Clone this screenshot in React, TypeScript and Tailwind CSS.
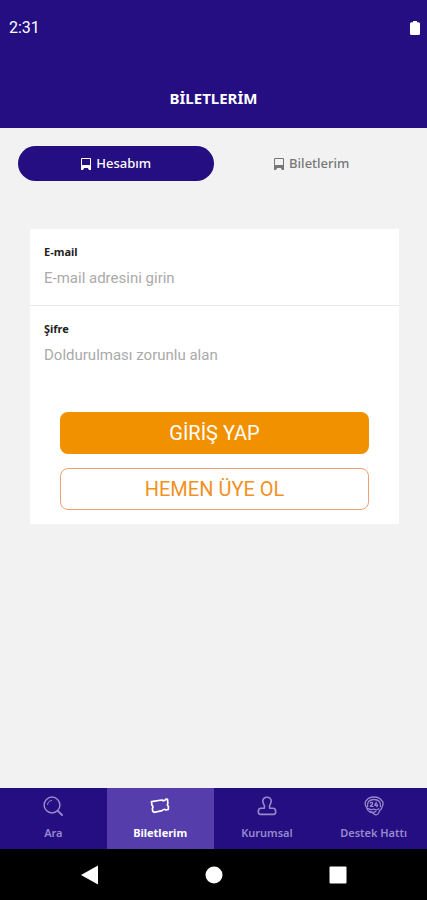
import React, { useState } from 'react';

function BusIcon() {
  return (
    <svg width="12" height="13" viewBox="0 0 12 13" fill="none" aria-hidden="true">
      <path d="M1.500 9V1.500h9V9" stroke="currentColor" strokeWidth="1" />
      <path d="M1 8h10v5H9l-1.200-2H4.200L3 13H1z" fill="currentColor" />
    </svg>
  );
}

function SearchIcon() {
  return (
    <svg width="20" height="20" viewBox="0 0 20 20" fill="none" stroke="currentColor" strokeWidth="1.5" strokeLinecap="round" aria-hidden="true">
      <circle cx="9" cy="9" r="7.9" />
      <path d="M4.600 8.600A4.300 4.300 0 0 1 8.600 4.500" strokeWidth="1" />
      <path d="M14.800 14.800 19 19" strokeWidth="1.9" />
    </svg>
  );
}

function TicketIcon() {
  return (
    <svg width="20" height="20" viewBox="0 0 20 20" fill="none" stroke="currentColor" strokeWidth="1.7" strokeLinejoin="round" aria-hidden="true">
      <path d="M1.500 5.700 11.800 4q1.300 1 2.600.5 1-.4 1.300-1.300l1.800.1.400 4.200q-.7.7-.5 1.500.2.800 1 1.300l-.1 3.200-2.500.5q-1-.7-2-.5-1.100.2-1.700 1.100L4.200 16.300 2.700 15.200 2.400 12.300q.7-.8.5-1.600-.2-.9-1-1.400z" />
    </svg>
  );
}

function PersonIcon() {
  return (
    <svg width="20" height="20" viewBox="0 0 20 20" fill="none" stroke="currentColor" strokeWidth="1.6" strokeLinejoin="round" aria-hidden="true">
      <path d="M10 1.200C7.400 1.200 5.800 2.900 5.800 5.200c0 1.700.6 2.700 1.300 3.700.5.900.5 2.200.2 3.300H4c-1.800 0-2.700 1.200-2.700 3.200 0 2.200.6 3 2.200 3h13c1.600 0 2.200-.8 2.200-3 0-2-.9-3.200-2.700-3.200h-3.300c-.3-1.100-.3-2.400.2-3.300.7-1 1.300-2 1.300-3.700 0-2.300-1.600-4-4.200-4z" />
    </svg>
  );
}

function SupportIcon() {
  return (
    <svg width="20" height="20" viewBox="0 0 20 20" fill="none" stroke="currentColor" strokeWidth="1.3" strokeLinecap="round" strokeLinejoin="round" aria-hidden="true">
      <path d="M2.300 4.600C4 2 7 1 10 1s6 1 7.700 3.600c1.800 1 1.800 4.200.4 6.200-.4 2.200-1.700 3.300-2.600 3.700-.5 2.600-1.600 4.300-3.500 4.300-1.700 0-2.600-1.200-4-2.400-2.700-.2-4.700-1.900-5.500-5.200C.7 8.900.8 5.800 2.300 4.600z" />
      <path d="M3.600 10.500C2.800 6 5.600 3.500 10 3.500s7.200 2.500 6.400 7" />
      <path d="M6.300 7.100c.8-1.300 2.600-.7 2.300.6-.2 1-1.800 1.800-2.300 2.700H9M12.300 6.300l-1.600 3h3M13 7.800v3" />
      <path d="M3.600 12.400c1.800.5 2.700 1.400 4 1.200s1.900-.7 2.900-.2 2.600.6 4.300-.6M6.100 16c2.300.6 4.300.5 5.700-.5" />
    </svg>
  );
}

const navItems = [
  { label: 'Ara', icon: SearchIcon },
  { label: 'Biletlerim', icon: TicketIcon },
  { label: 'Kurumsal', icon: PersonIcon },
  { label: 'Destek Hattı', icon: SupportIcon },
];

export default function App() {
  const [tab, setTab] = useState('Hesabım');
  const [active, setActive] = useState('Biletlerim');
  const [email, setEmail] = useState('');
  const [password, setPassword] = useState('');

  return (
    <div className="flex min-h-screen flex-col bg-[#f2f2f2] font-['Noto_Sans',sans-serif]">
      <header className="bg-[#250e82] pb-[18px] text-white">
        <div className="flex h-14 items-center justify-between pl-[9px] pr-[7px] font-['Roboto',sans-serif] text-base">
          <span>2:31</span>
          <svg width="10" height="14" viewBox="0 0 10 14" fill="currentColor" aria-label="Pil">
            <path d="M3 0h4v1.300h1.500Q10 1.300 10 2.800v9.700Q10 14 8.500 14h-7Q0 14 0 12.500V2.800Q0 1.300 1.500 1.300H3z" />
          </svg>
        </div>
        <h1 className="pt-[30px] text-center text-[15px] font-bold leading-6">BİLETLERİM</h1>
      </header>

      <main className="flex-1">
        {/* Tabs */}
        <div className="grid grid-cols-2 px-[18px] pt-[18px]">
          {['Hesabım', 'Biletlerim'].map((name) => (
            <button
              key={name}
              type="button"
              onClick={() => setTab(name)}
              className={`flex h-[35px] items-center justify-center gap-1 rounded-full text-[13px] font-medium ${
                tab === name ? 'bg-[#250e82] text-white' : 'text-[#777777]'
              }`}
            >
              <BusIcon />
              {name}
            </button>
          ))}
        </div>

        {/* Login form */}
        <form
          onSubmit={(e) => e.preventDefault()}
          className="ml-[30px] mr-7 mt-12 bg-white pb-[14px]"
        >
          <div className="border-b border-[#e9e9e9] px-[14px] pb-[13px] pt-[15px]">
            <label htmlFor="email" className="block text-[11px] font-bold leading-4 text-[#222222]">
              E-mail
            </label>
            <input
              id="email"
              type="email"
              value={email}
              onChange={(e) => setEmail(e.target.value)}
              placeholder="E-mail adresini girin"
              className="mt-1 block h-7 w-full font-['Roboto',sans-serif] text-[15px] text-[#222222] outline-none placeholder:text-[#aaaaaa]"
            />
          </div>
          <div className="px-[14px] pt-[15px]">
            <label htmlFor="password" className="block text-[11px] font-bold leading-4 text-[#222222]">
              Şifre
            </label>
            <input
              id="password"
              type="password"
              value={password}
              onChange={(e) => setPassword(e.target.value)}
              placeholder="Doldurulması zorunlu alan"
              className="mt-1 block h-7 w-full font-['Roboto',sans-serif] text-[15px] text-[#222222] outline-none placeholder:text-[#aaaaaa]"
            />
          </div>
          <div className="mt-[43px] flex flex-col gap-[14px] px-[30px] font-['Roboto',sans-serif] text-xl">
            <button type="submit" className="h-[42px] rounded-lg bg-[#f29100] text-white">
              GİRİŞ YAP
            </button>
            <button type="button" className="h-[42px] rounded-lg border border-[#f2a070] text-[#f29122]">
              HEMEN ÜYE OL
            </button>
          </div>
        </form>
      </main>

      <nav className="grid h-[61px] grid-cols-4 bg-[#250e82]">
        {navItems.map(({ label, icon: Icon }) => (
          <button
            key={label}
            type="button"
            onClick={() => setActive(label)}
            className={`flex flex-col items-center gap-[9px] pt-2 text-[11px] leading-4 ${
              active === label ? 'bg-[#553dac] font-bold text-white' : 'font-semibold text-[#9689cc]'
            }`}
          >
            <Icon />
            {label}
          </button>
        ))}
      </nav>

      {/* System buttons */}
      <div className="flex h-[51px] items-center justify-center gap-[106px] bg-black text-white">
        <button type="button" aria-label="Geri">
          <svg width="18" height="20" viewBox="0 0 18 20" fill="currentColor">
            <path d="M0 10 17 .6v18.800z" />
          </svg>
        </button>
        <button type="button" aria-label="Ana ekran">
          <svg width="18" height="18" viewBox="0 0 18 18" fill="currentColor">
            <circle cx="9" cy="9" r="8.500" />
          </svg>
        </button>
        <button type="button" aria-label="Son uygulamalar">
          <svg width="18" height="18" viewBox="0 0 18 18" fill="currentColor">
            <rect width="17" height="17" x=".5" y=".5" rx="1" />
          </svg>
        </button>
      </div>
    </div>
  );
}
